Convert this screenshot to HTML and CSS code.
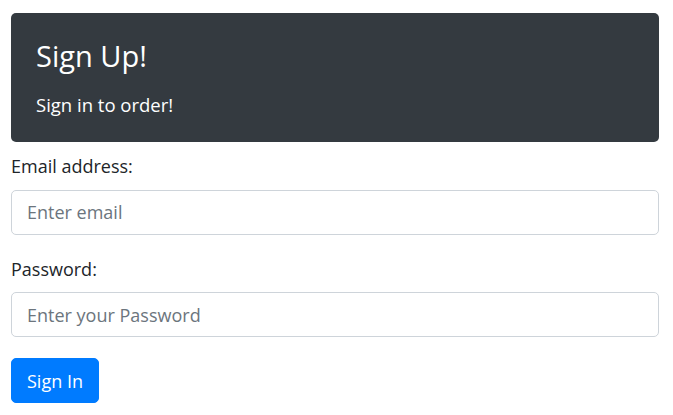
FILE: index.html
```html
<!DOCTYPE html>
<html lang="en">
<head>
<meta charset="utf-8">
<title>Sign Up</title>
<link rel="stylesheet" href="styles.css">
</head>
<body>
<div class="page">
  <div class="jumbo">
    <h1 class="jumbo-title">Sign Up!</h1>
    <p class="jumbo-text">Sign in to order!</p>
  </div>
  <form class="form">
    <div class="field">
      <label class="label" for="email">Email address:</label>
      <input class="input" type="email" id="email" placeholder="Enter email">
    </div>
    <div class="field">
      <label class="label" for="pwd">Password:</label>
      <input class="input" type="password" id="pwd" placeholder="Enter your Password">
    </div>
    <button class="btn" type="submit">Sign In</button>
  </form>
</div>
</body>
</html>
```

FILE: styles.css
```css
* { box-sizing: border-box; }
html, body { margin: 0; padding: 0; background: #fff; }
body {
  font-family: "Open Sans", "Noto Sans", sans-serif;
  font-size: 18px;
  line-height: 27px;
  color: #212529;
}
.page {
  padding: 13px 14px 0 11px;
}
.jumbo {
  background: #343a40;
  color: #fff;
  border-radius: 5px;
  padding: 25px 25px 23.5px;
  display: flex;
  flex-direction: column;
  gap: 18px;
}
.jumbo-title {
  margin: 0;
  font-size: 29px;
  line-height: 35px;
  font-weight: 400;
}
.jumbo-text {
  margin: 0;
  font-size: 18.5px;
  line-height: 27px;
}
.form {
  padding-top: 11.5px;
  display: flex;
  flex-direction: column;
  align-items: flex-start;
  gap: 21px;
}
.field {
  width: 100%;
  display: flex;
  flex-direction: column;
  gap: 9.5px;
}
.label {
  display: block;
}
.input {
  width: 100%;
  height: 45px;
  border: 1px solid #ced4da;
  border-radius: 5px;
  padding: 0 15px;
  font-family: inherit;
  font-size: 18px;
  color: #495057;
  background: #fff;
  outline: none;
}
.input::placeholder { color: #6c757d; opacity: 1; }
.btn {
  height: 45px;
  padding: 0 15px;
  border: 1px solid #007bff;
  border-radius: 5px;
  background: #007bff;
  color: #fff;
  font-family: inherit;
  font-size: 18px;
  cursor: pointer;
}
```
